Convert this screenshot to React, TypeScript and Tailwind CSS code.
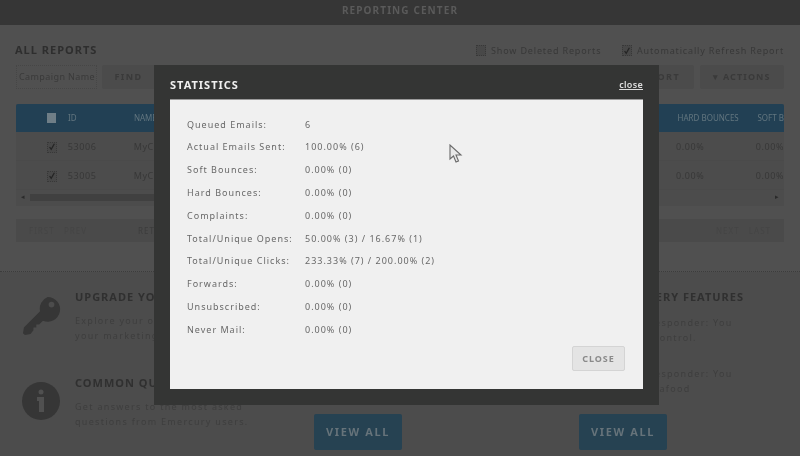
const font = 'font-["Noto_Sans",sans-serif]';

const stats = [
  ['Queued Emails:', '6'],
  ['Actual Emails Sent:', '100.00% (6)'],
  ['Soft Bounces:', '0.00% (0)'],
  ['Hard Bounces:', '0.00% (0)'],
  ['Complaints:', '0.00% (0)'],
  ['Total/Unique Opens:', '50.00% (3) / 16.67% (1)'],
  ['Total/Unique Clicks:', '233.33% (7) / 200.00% (2)'],
  ['Forwards:', '0.00% (0)'],
  ['Unsubscribed:', '0.00% (0)'],
  ['Never Mail:', '0.00% (0)'],
];

function Check({ checked = true }: { checked?: boolean }) {
  return (
    <span className="w-[10px] h-[11px] border border-dotted border-[#383838] bg-[#484848] flex items-center justify-center shrink-0">
      {checked && (
        <svg width="10" height="10" viewBox="0 0 10 10" fill="none" stroke="#242424" strokeWidth="1.6">
          <path d="M2 5l2 3 4-7" />
        </svg>
      )}
    </span>
  );
}

function TableRow({ id }: { id: string }) {
  return (
    <div className="flex items-center h-[29px] pt-[2px] text-[9px] tracking-[0.6px] text-[#383838] border-b border-[#4a4a4a]">
      <div className="w-[31px]" />
      <div className="w-[21px] flex"><Check /></div>
      <div className="w-[66px]">{id}</div>
      <div className="w-[544px]">MyCampaign</div>
      <div className="w-[80px]">0.00%</div>
      <div>0.00%</div>
    </div>
  );
}

function KeyIcon() {
  return (
    <svg width="40" height="40" viewBox="0 0 42 42" fill="#363636">
      <path d="M27 1a13 13 0 1 1-5 25l-4 4h-3v3h-3v3l-3 4-6 1-2-2 1-6 17-17A13 13 0 0 1 27 1z" />
      <circle cx="31" cy="9" r="3" fill="#4c4c4c" />
    </svg>
  );
}

function InfoIcon() {
  return (
    <svg width="38" height="38" viewBox="0 0 38 38" fill="#363636">
      <circle cx="19" cy="19" r="19" />
      <circle cx="19" cy="10" r="2.5" fill="#505050" />
      <path d="M15 15h7v15h-5V19h-2z" fill="#505050" />
    </svg>
  );
}

function ViewAll() {
  return (
    <div className="w-[88px] h-[36px] rounded-[2px] bg-[#264252] flex items-center justify-center text-[11px] font-bold tracking-[1.6px] text-[#66737a]">
      VIEW ALL
    </div>
  );
}

function Feature({ icon, title, lines }: { icon: React.ReactNode; title: string; lines: string[] }) {
  return (
    <div className="flex">
      <div className="w-[59px] pt-[6px] pl-[6px]">{icon}</div>
      <div>
        <div className="text-[11px] font-bold tracking-[1px] text-[#303030] leading-[14px]">{title}</div>
        <div className="mt-[9px] text-[9px] tracking-[1.3px] leading-[15px] text-[#3e3e3e] whitespace-nowrap">
          {lines.map(l => <div key={l}>{l}</div>)}
        </div>
      </div>
    </div>
  );
}

export default function App() {
  return (
    <div className={`relative w-[800px] h-[456px] overflow-hidden bg-[#505050] blur-[0.5px] ${font}`}>
      <div className="h-[25px] pb-[5px] bg-[#363636] flex items-center justify-center text-[10px] font-bold tracking-[1.1px] text-[#5a5a5a]">
        REPORTING CENTER
      </div>

      <div className="h-[247px] px-[16px] pt-[18px] border-b border-dotted border-[#3c3c3c]">
        <div className="flex items-center justify-between h-[15px]">
          <div className="text-[11px] font-bold tracking-[1px] text-[#2e2e2e] -ml-[1px]">ALL REPORTS</div>
          <div className="flex items-center text-[9px] tracking-[0.85px] text-[#383838]">
            <Check checked={false} />
            <span className="ml-[5px] w-[131px]">Show Deleted Reports</span>
            <Check />
            <span className="ml-[5px]">Automatically Refresh Report</span>
          </div>
        </div>

        <div className="flex mt-[7px] h-[24px] text-[9px] text-[#3a3a3a]">
          <div className="w-[81px] border border-dotted border-[#464646] flex items-center pl-[2px] tracking-[0.4px]">Campaign Name</div>
          <div className="ml-[5px] w-[53px] bg-[#4b4b4b] rounded-[2px] flex items-center justify-center font-bold tracking-[1.4px]">FIND</div>
          <div className="ml-auto w-[60px] pr-[14px] bg-[#4b4b4b] rounded-[2px] flex items-center justify-end font-bold tracking-[1.4px]">EXPORT</div>
          <div className="ml-[6px] w-[84px] bg-[#4b4b4b] rounded-[2px] flex items-center justify-center font-bold tracking-[1.1px]">▾ ACTIONS</div>
        </div>

        <div className="mt-[15px] h-[102px] bg-[#4c4c4c] overflow-hidden">
          <div className="flex items-center h-[28px] bg-[#224054] rounded-t-[2px] text-[8px] text-[#62757f]">
            <div className="w-[31px]" />
            <div className="w-[21px]"><span className="block w-[9px] h-[10px] bg-[#6f7e87]" /></div>
            <div className="w-[66px]">ID</div>
            <div className="w-[544px]">NAME</div>
            <div className="w-[80px]">HARD BOUNCES</div>
            <div className="whitespace-nowrap">SOFT B</div>
          </div>
          <TableRow id="53006" />
          <TableRow id="53005" />
          <div className="flex items-center h-[15px] text-[7px] text-[#2a2a2a] px-[5px]">
            <span>◂</span>
            <div className="ml-[5px] w-[130px] h-[7px] bg-[#404040]" />
            <span className="ml-auto">▸</span>
          </div>
        </div>

        <div className="mt-[13px] h-[23px] bg-[#4a4a4a] flex items-center text-[8px] tracking-[1px] text-[#3c3c3c] px-[13px]">
          <span className="w-[109px] text-[#454545]">FIRST &nbsp; PREV</span>
          <span>RETURN</span>
          <span className="ml-auto text-[#454545]">NEXT &nbsp; LAST</span>
        </div>
      </div>

      <div className="flex h-[184px] bg-[#4c4c4c] px-[16px] pt-[18px]">
        <div className="w-[262px] flex flex-col gap-[33px]">
          <Feature icon={<KeyIcon />} title="UPGRADE YOUR PLAN" lines={['Explore your options for', 'your marketing']} />
          <Feature icon={<InfoIcon />} title="COMMON QUESTIONS" lines={['Get answers to the most asked', 'questions from Emercury users.']} />
        </div>
        <div className="w-[266px] flex flex-col">
          <div className="mt-auto mb-[6px] ml-[36px]"><ViewAll /></div>
        </div>
        <div className="flex-1 flex flex-col">
          <div className="ml-[75px] text-[11px] font-bold tracking-[1px] text-[#303030] leading-[14px] whitespace-nowrap">DELIVERY FEATURES</div>
          <div className="ml-[81px] mt-[11px] text-[9px] tracking-[1.3px] leading-[15px] text-[#3e3e3e] whitespace-nowrap">
            <div>Autoresponder: You</div>
            <div>have control.</div>
            <div className="mt-[21px]">Autoresponder: You</div>
            <div>can seafood</div>
          </div>
          <div className="mt-auto mb-[6px] ml-[35px]"><ViewAll /></div>
        </div>
      </div>

      <div className="absolute left-[154px] top-[65px] w-[505px] h-[340px] bg-[#343534] px-[16px] flex flex-col">
        <div className="h-[34px] flex items-end justify-between pb-[7px]">
          <div className="text-[11px] font-bold tracking-[1px] text-[#f0f0f0] leading-[14px]">STATISTICS</div>
          <a className="text-[9px] font-semibold underline tracking-[0.3px] text-[#dddddd] leading-[14px]">close</a>
        </div>
        <div className="h-[290px] bg-[#f0f0f0] border-t border-[#9a9a9a] pl-[17px] pr-[18px] pt-[13px] pb-[18px] flex flex-col">
          {stats.map(([label, value]) => (
            <div key={label} className="flex items-center h-[22.8px] text-[9px] tracking-[1px] text-[#686868] whitespace-nowrap">
              <div className="w-[118px]">{label}</div>
              <div>{value}</div>
            </div>
          ))}
          <div className="mt-auto self-end w-[53px] h-[25px] rounded-[2px] bg-[#e4e4e4] border border-[#d4d4d4] flex items-center justify-center text-[9px] font-bold tracking-[1px] text-[#8a8a8a]">
            CLOSE
          </div>
        </div>
      </div>

      <svg className="absolute left-[449px] top-[144px]" width="14" height="20" viewBox="0 0 14 20">
        <path d="M1 1v14l3.5-3 2.5 6 2.5-1-2.5-6h5z" fill="#e8e8e8" stroke="#6a6a6a" strokeWidth="1.1" />
      </svg>
    </div>
  );
}
